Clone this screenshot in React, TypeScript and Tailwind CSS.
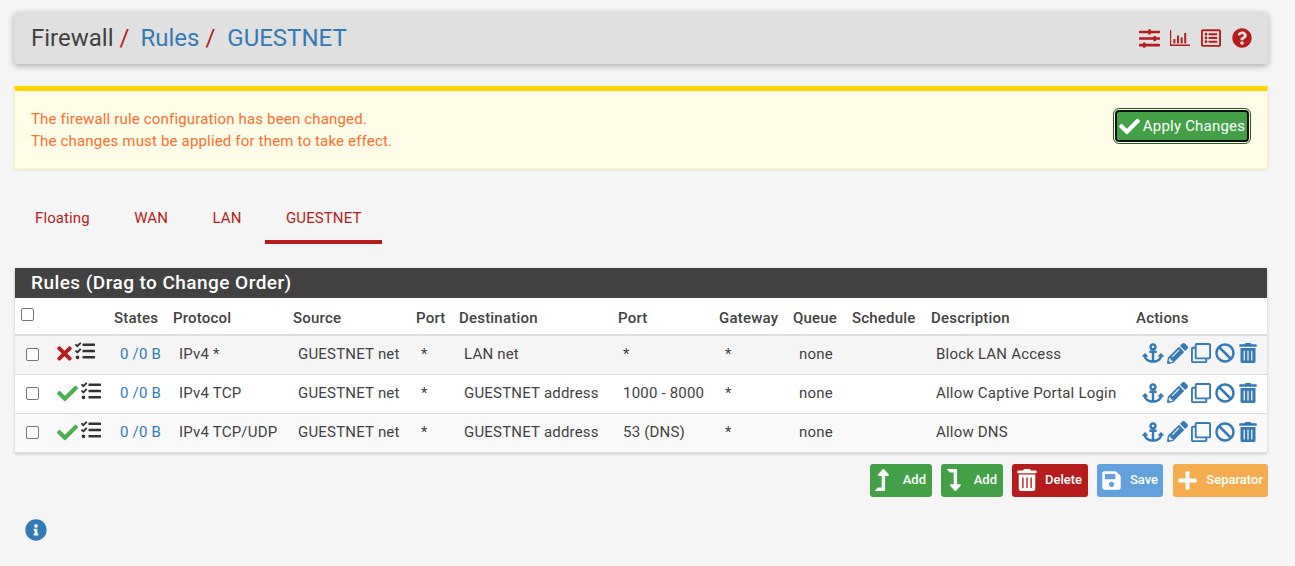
import React from "react";
import { FaSlidersH, FaRegListAlt, FaQuestionCircle, FaCheck, FaTimes, FaTasks, FaAnchor, FaPencilAlt, FaRegClone, FaBan, FaTrashAlt, FaLevelUpAlt, FaLevelDownAlt, FaSave, FaPlus, FaInfoCircle } from "react-icons/fa";

function BarChart() {
  return (
    <svg width="20" height="16" viewBox="0 0 20 16" fill="#b71c1c">
      <path d="M0 0h1.2v14.6H20V16H0z" />
      <rect x="3.4" y="9" width="2" height="4.4" />
      <rect x="7" y="5.5" width="2" height="7.9" />
      <rect x="10.6" y="7.5" width="2" height="5.9" />
      <rect x="14.2" y="3" width="2" height="10.4" />
    </svg>
  );
}

const rules = [
  { ok: false, proto: "IPv4 *", src: "GUESTNET net", dest: "LAN net", port: "*", desc: "Block LAN Access", bg: "bg-[#f5f5f5]", pad: "[&>td]:pb-[1px]" },
  { ok: true, proto: "IPv4 TCP", src: "GUESTNET net", dest: "GUESTNET address", port: "1000 - 8000", desc: "Allow Captive Portal Login", bg: "bg-white", pad: "" },
  { ok: true, proto: "IPv4 TCP/UDP", src: "GUESTNET net", dest: "GUESTNET address", port: "53 (DNS)", desc: "Allow DNS", bg: "bg-[#f9f9f9]", pad: "" },
];

const heads = ["States", "Protocol", "Source", "Port", "Destination", "Port", "Gateway", "Queue", "Schedule", "Description", "Actions"];

function Check() {
  return <input type="checkbox" className="block w-[13px] h-[13px] m-0 appearance-none rounded-[2px] border border-[#767676] bg-white" />;
}

export default function App() {
  return (
    <div className="min-h-[566px] bg-[#f5f5f5] pt-3 px-[14px] pr-[27px] text-[15px] tracking-[0.2px] text-[#424242] font-['Roboto',sans-serif]">
      <div className="h-[52px] bg-[#e0e0e0] rounded-[3px] shadow-[0_2px_6px_rgba(0,0,0,0.3)] flex items-center justify-between pl-[17px] pr-[16px]">
        <div className="text-[24px] tracking-normal leading-none flex items-baseline">
          <span>Firewall</span>
          <span className="text-[#b71c1c] ml-[6px]">/</span>
          <span className="text-[#337ab7] ml-[11px]">Rules</span>
          <span className="text-[#b71c1c] ml-[6px]">/</span>
          <span className="text-[#337ab7] ml-[12px]">GUESTNET</span>
        </div>
        <div className="flex items-center text-[#b71c1c]">
          <FaSlidersH size={21} />
          <span className="ml-[10px] flex"><BarChart /></span>
          <FaRegListAlt size={20} className="ml-[11px]" />
          <FaQuestionCircle size={20} className="ml-[11px]" />
        </div>
      </div>

      <div className="mt-[22px] h-[83px] bg-[#fffde7] border-t-[5px] border-x border-b border-t-[#ffd600] border-x-[#fff3b0] border-b-[#fff3b0] shadow-[0_1px_3px_rgba(0,0,0,0.08)] flex items-center justify-between pl-[16px] pr-[18px]">
        <div className="text-[#ff6d2e] tracking-[0.17px] leading-[22px]">
          <div>The firewall rule configuration has been changed.</div>
          <div>The changes must be applied for them to take effect.</div>
        </div>
        <button className="-mt-[7px] h-[32px] w-[134px] rounded-[4px] bg-[#43a047] border-[2px] border-[#111] outline outline-1 outline-[#1b5e20] outline-offset-[1px] text-white flex items-center justify-center gap-[3px] whitespace-nowrap">
          <FaCheck size={21} />
          <span>Apply Changes</span>
        </button>
      </div>

      <div className="mt-[28px] h-[47px] flex gap-[2.5px] text-[#b71c1c] tracking-[0.1px]">
        <div className="px-[21px] pt-[10px]">Floating</div>
        <div className="px-[21px] pt-[10px]">WAN</div>
        <div className="px-[21px] pt-[10px]">LAN</div>
        <div className="px-[21px] pt-[10px] border-b-[4px] border-[#b71c1c]">GUESTNET</div>
      </div>

      <div className="mt-[24px] mx-px shadow-[0_1px_3px_rgba(0,0,0,0.2)]">
        <div className="h-[30px] bg-[#424242] text-white font-medium text-[19px] tracking-[0.45px] pl-[16px] leading-[30px]">Rules (Drag to Change Order)</div>
        <table className="w-[1252px] table-fixed border-collapse bg-white">
          <colgroup>
            <col className="w-[36px]" />
            <col className="w-[58px]" />
            <col className="w-[59px]" />
            <col className="w-[120px]" />
            <col className="w-[123px]" />
            <col className="w-[43px]" />
            <col className="w-[159px]" />
            <col className="w-[101px]" />
            <col className="w-[74px]" />
            <col className="w-[59px]" />
            <col className="w-[79px]" />
            <col className="w-[205px]" />
            <col className="w-[136px]" />
          </colgroup>
          <thead>
            <tr className="h-[37px] border-b-2 border-[#dddddd]">
              <th className="pl-[6px] align-top pt-[10px] font-normal"><Check /></th>
              <th />
              {heads.map((h, i) => (
                <th key={i} className="pl-[5px] text-left font-medium pt-[5px] whitespace-nowrap">{h}</th>
              ))}
            </tr>
          </thead>
          <tbody>
            {rules.map((r, i) => (
              <tr key={i} className={`h-[39px] border-b border-[#dddddd] ${r.bg} ${r.pad}`}>
                <td className="pl-[11px]"><Check /></td>
                <td className="pl-[6px]">
                  <div className="flex items-start -mt-[3px]">
                    {r.ok ? <FaCheck size={21} className="text-[#4caf50] mt-[3px]" /> : <FaTimes size={21} className="text-[#b71c1c] mt-[2px] -ml-[3px]" />}
                    <FaTasks size={20} className={r.ok ? "text-[#333] ml-[3px] mt-[1px]" : "text-[#333]"} />
                  </div>
                </td>
                <td className="pl-[11px] text-[#337ab7] whitespace-nowrap">0 /0 B</td>
                <td className="pl-[11px] whitespace-nowrap">{r.proto}</td>
                <td className="pl-[10px] whitespace-nowrap">{r.src}</td>
                <td className="pl-[10px]">*</td>
                <td className="pl-[10px] whitespace-nowrap">{r.dest}</td>
                <td className="pl-[10px] whitespace-nowrap">{r.port}</td>
                <td className="pl-[11px]">*</td>
                <td className="pl-[11px]">none</td>
                <td />
                <td className="pl-[10px] whitespace-nowrap">{r.desc}</td>
                <td className="pl-[11px]">
                  <div className="flex items-center text-[#337ab7] -mt-[2px]">
                    <FaAnchor size={22} />
                    <FaPencilAlt size={21} className="ml-[3px]" />
                    <FaRegClone size={20} className="ml-[3px]" />
                    <FaBan size={20} className="ml-[4px]" />
                    <FaTrashAlt size={20} className="ml-[3px]" />
                  </div>
                </td>
              </tr>
            ))}
          </tbody>
        </table>
      </div>

      <div className="mt-[11px] flex justify-end gap-[9px] text-white text-[13px] tracking-normal font-medium">
        <button className="h-[33px] w-[62px] bg-[#43a047] rounded-[3px] flex items-center justify-between pl-[1px] pr-[6px]"><FaLevelUpAlt size={22} /><span>Add</span></button>
        <button className="h-[33px] w-[62px] bg-[#43a047] rounded-[3px] flex items-center justify-between pl-[2px] pr-[6px]"><FaLevelDownAlt size={22} /><span>Add</span></button>
        <button className="h-[33px] w-[76px] bg-[#b71c1c] rounded-[3px] flex items-center justify-between pl-[4px] pr-[6px]"><FaTrashAlt size={22} /><span>Delete</span></button>
        <button className="h-[33px] w-[66px] bg-[#64a0dd] rounded-[3px] flex items-center justify-between pl-[4px] pr-[5px]"><FaSave size={21} /><span>Save</span></button>
        <button className="h-[33px] w-[95px] ml-[1px] bg-[#f5ac4e] rounded-[3px] flex items-center justify-between pl-[4px] pr-[5px]"><FaPlus size={21} /><span>Separator</span></button>
      </div>

      <div className="mt-[22px] ml-[11px] text-[#337ab7]"><FaInfoCircle size={22} /></div>
    </div>
  );
}
